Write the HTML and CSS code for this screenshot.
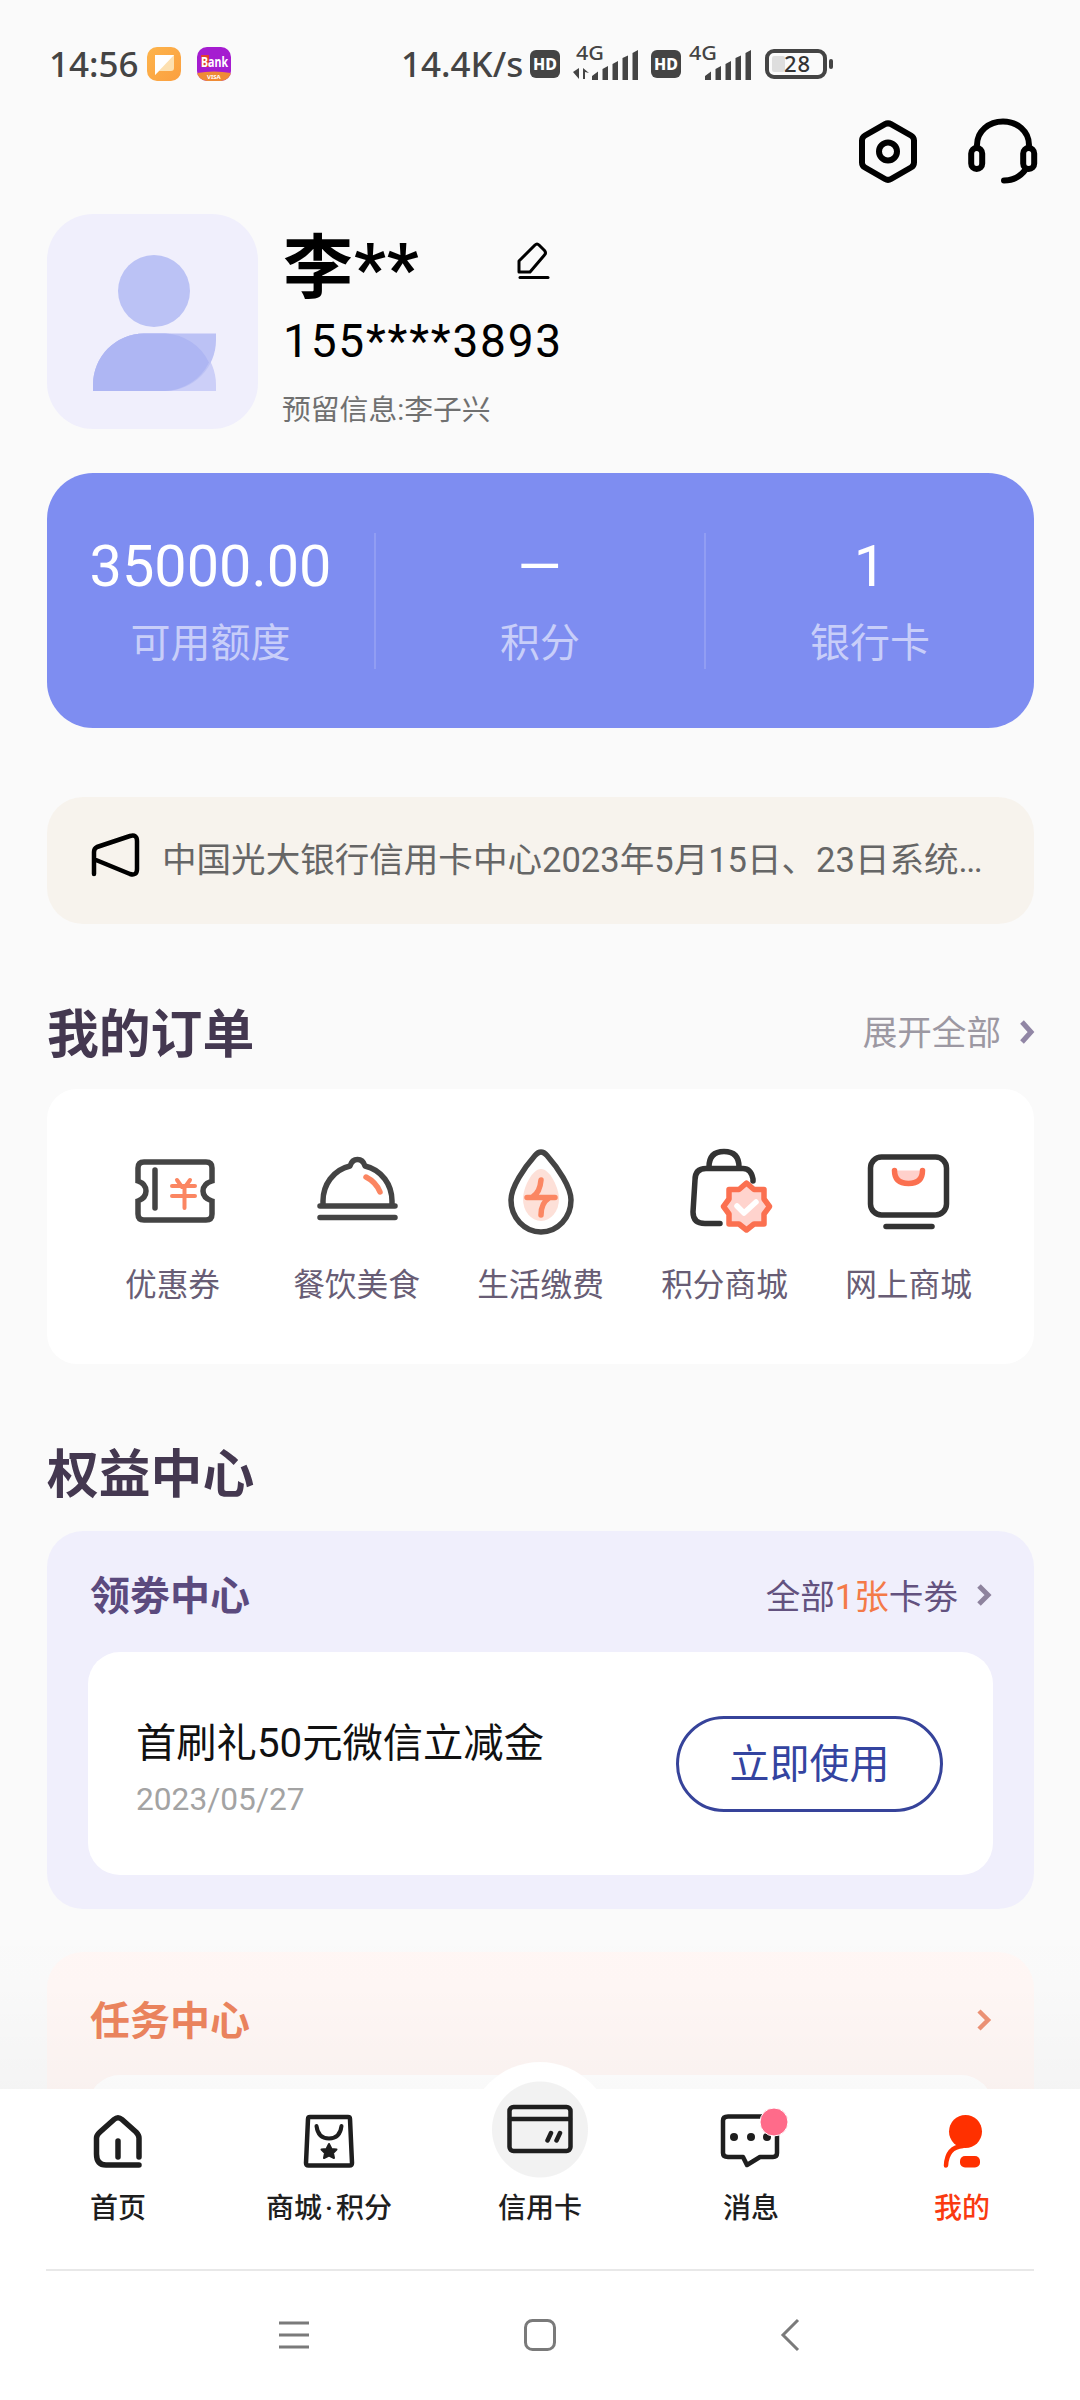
FILE: index.html
```html
<!DOCTYPE html>
<html lang="zh-CN">
<head>
<meta charset="utf-8">
<title>我的</title>
<link rel="stylesheet" href="styles.css">
</head>
<body>
<div class="screen">
  <main class="content">
    <div class="status">
      <span class="clock">14:56</span>
      <svg class="app-note" width="34" height="34" viewBox="0 0 34 34"><defs><linearGradient id="note" x1="0" y1="0" x2="1" y2="1"><stop offset="0" stop-color="#fdb44c"/><stop offset="1" stop-color="#fb9f3f"/></linearGradient></defs><rect width="34" height="34" rx="10" fill="url(#note)"/><path d="M8 8H27V21Q27 24 24 24H12L8 28Z" fill="#fde0b0"/><path d="M8 8H27L8 28Z" fill="#fff"/></svg>
      <svg class="app-bank" width="34" height="34" viewBox="0 0 34 34"><defs><clipPath id="bank"><rect width="34" height="34" rx="10"/></clipPath></defs><g clip-path="url(#bank)"><rect width="34" height="34" fill="#a51cd0"/><path d="M0 26Q17 23 34 26V34H0Z" fill="#ef8b35"/><path d="M4 8H12V20H4Z" fill="#e2402d"/></g><text x="4" y="20" font-size="14" font-weight="700" textLength="27" lengthAdjust="spacingAndGlyphs" fill="#fff">Bank</text><text x="10" y="32" font-size="6" font-weight="700" fill="#fff">VISA</text></svg>
      <span class="speed">14.4K/s</span>
      <span class="hd">HD</span>
      <svg class="signal" width="66" height="36" viewBox="0 0 66 36"><text x="3" y="14" font-size="20" textLength="28" lengthAdjust="spacingAndGlyphs" fill="#444">4G</text><path d="M0 26L6 22V33ZM10 22V33H12V26L16 27Z" fill="#444"/><path d="M19 30L25 25.500V34H19ZM29.500 23L35 20V34H29.500ZM39.500 18L45 15V34H39.500ZM49.500 12L55 9.500V34H49.500ZM59.500 7L65 4V34H59.500Z" fill="#444"/></svg>
      <span class="hd hd-second">HD</span>
      <svg class="signal signal-second" width="66" height="36" viewBox="0 0 66 36"><text x="3" y="14" font-size="20" textLength="28" lengthAdjust="spacingAndGlyphs" fill="#444">4G</text><path d="M19 30L25 25.500V34H19ZM29.500 23L35 20V34H29.500ZM39.500 18L45 15V34H39.500ZM49.500 12L55 9.500V34H49.500ZM59.500 7L65 4V34H59.500Z" fill="#444"/></svg>
      <svg width="70" height="36" viewBox="0 0 70 36"><rect x="2" y="5" width="58" height="26" rx="7" fill="none" stroke="#444" stroke-width="4"/><rect x="7" y="10" width="13" height="16" rx="2" fill="#dedede"/><rect x="64" y="13" width="4" height="10" rx="2" fill="#444"/><text x="19" y="26" font-size="22" textLength="26" fill="#333">28</text></svg>
    </div>

    <div class="actions">
      <svg width="60" height="66" viewBox="0 0 60 66" fill="none" stroke="#000" stroke-width="6"><path d="M27 6.200Q30 4.500 33 6.200L53 17.500Q56 19.200 56 22.500V44.500Q56 47.800 53 49.500L33 61Q30 62.700 27 61L7 49.500Q4 47.800 4 44.500V22.500Q4 19.200 7 17.500Z"/><circle cx="30" cy="33.500" r="9"/></svg>
      <svg width="70" height="66" viewBox="0 0 70 66" fill="none" stroke="#000" stroke-width="6" stroke-linecap="round"><path d="M9 27C9 13 21 3.500 35 3.500S61 13 61 27"/><rect x="3.200" y="30" width="11" height="21" rx="5.500"/><rect x="55.200" y="30" width="11" height="21" rx="5.500"/><path d="M58 51C53 58 45 62.500 36 62.500"/></svg>
    </div>

    <section class="profile">
      <svg class="avatar" width="211" height="215" viewBox="0 0 211 215"><rect width="211" height="215" rx="46" fill="#f0effc"/><circle cx="107" cy="77" r="36" fill="#bbc2f5"/><path d="M46 177V171A51 51.500 0 0 1 97 119.500H118A51 51.500 0 0 1 169 171V177Z" fill="#cccff8"/><path d="M46 177V171A51 51.500 0 0 1 97 119.500H169V126A51 51 0 0 1 118 177Z" fill="#bcc2f5"/><path d="M46 177V171A51 51.500 0 0 1 97 119.500H118A51 51.500 0 0 1 162 148.500A51 51 0 0 1 118 177Z" fill="#aeb6f3"/></svg>
      <div class="who">
        <div class="name-row"><span class="name">李**</span>
          <svg width="34" height="42" viewBox="0 0 34 42" fill="none" stroke="#000" stroke-width="3" stroke-linejoin="round" stroke-linecap="round"><path d="M3 20L19 4Q21 2 23 4L28.500 9.500Q30.500 12 28.500 14L14 31H3Z"/><path d="M4 36.500H32"/></svg>
        </div>
        <div class="phone">155****3893</div>
        <div class="reserved">预留信息:李子兴</div>
      </div>
    </section>

    <section class="stats">
      <div class="stat"><b>35000.00</b><span>可用额度</span></div>
      <div class="stat"><b class="dash">–</b><span>积分</span></div>
      <div class="stat"><b>1</b><span>银行卡</span></div>
    </section>

    <section class="notice">
      <svg width="50" height="46" viewBox="0 0 50 46" fill="none" stroke="#000" stroke-width="4.500" stroke-linecap="round" stroke-linejoin="round"><path d="M3 42V20Q3 16.500 6 15L39 4Q46 2 46 9V37Q46 44 39 42L5 28"/></svg>
      <p>中国光大银行信用卡中心2023年5月15日、23日系统<span class="dots">...</span></p>
    </section>

    <header class="section-head"><h2>我的订单</h2><a class="more">展开全部<svg width="14" height="24" viewBox="0 0 14 24" fill="none" stroke="#9186a5" stroke-width="5"><path d="M2 2L11 12L2 22"/></svg></a></header>
    <section class="orders">
      <div class="order"><svg width="90" height="90" viewBox="-1 0 90 90" fill="none" stroke="#444" stroke-width="5.500" stroke-linecap="round"><path d="M15 16H77Q83 16 83 22V35Q74 38 74 45T83 55V68Q83 74 77 74H15Q9 74 9 68V55Q17 52 17 45T9 35V22Q9 16 15 16Z"/><path d="M26 24V62"/><g stroke="#fb8662" stroke-width="4"><path d="M48 34L53 41M61 34L56 41M43 40H66M43 50H66M55.500 41V62"/></g></svg><span>优惠券</span></div>
      <div class="order"><svg width="90" height="90" viewBox="0 0 90 90" fill="none" stroke="#444" stroke-width="5.500" stroke-linecap="round" stroke-linejoin="round"><path d="M8 60H83M8 71.500H83"/><path d="M11 59V55C11 39 21 24 38 20Q40 13.500 45.500 13.500T53 20C70 24 80 39 80 55V59"/><path d="M54 31Q64 36 68 46" stroke="#fb8662"/></svg><span>餐饮美食</span></div>
      <div class="order"><svg width="90" height="90" viewBox="0 0 90 90" fill="none" stroke="#444" stroke-width="5.500" stroke-linecap="round"><path d="M45 23C36 23 27 42 27 53A18 22 0 0 0 63 53C63 42 54 23 45 23Z" fill="#fde0d8" stroke="none"/><path d="M39 9.500Q45 2.500 51 9.500C62 22 75 41 75 54A30 32 0 0 1 15 54C15 41 28 22 39 9.500Z"/><path d="M45 34Q44 46 37 50.500M53 52Q45 57 45 69M31 51.500H59" stroke="#fb8662" stroke-linejoin="round"/></svg><span>生活缴费</span></div>
      <div class="order"><svg width="90" height="90" viewBox="-2 0 90 90" fill="none" stroke="#333" stroke-width="5.500" stroke-linecap="round" stroke-linejoin="round"><path d="M27 22V21Q27 5.500 42 5.500T57 21V22"/><path d="M71 35V33Q69 22.500 61 22.500H24Q13 22.500 13 34L11 66Q11 77.500 23 77.500H38"/><path d="M64.500 37L72 43.500H82V53L87.500 60.500L82 68V78H72L64.500 84L57 78H47V68L41.500 60.500L47 53V43.500H57Z" fill="#ffd3cd" stroke="#fb7050"/><path d="M55 60L62 67L74 56" stroke="#fff"/></svg><span>积分商城</span></div>
      <div class="order"><svg width="90" height="90" viewBox="0 0 90 90" fill="none" stroke="#333" stroke-width="5.500" stroke-linecap="round"><rect x="6.500" y="11" width="76" height="58" rx="11"/><path d="M22 80.500H68"/><path d="M30.500 24.500Q30.500 37.500 44.500 37.500T58.500 24.500" fill="#ffd0cb" stroke="#fb7050"/></svg><span>网上商城</span></div>
    </section>

    <header class="section-head"><h2>权益中心</h2></header>
    <section class="panel coupons">
      <header class="panel-head"><h3>领劵中心</h3><a class="more">全部<em>1张</em>卡劵<svg width="14" height="22" viewBox="0 0 14 22" fill="none" stroke="#8e839e" stroke-width="5"><path d="M2 2L11 11L2 20"/></svg></a></header>
      <div class="coupon">
        <div><h4>首刷礼50元微信立减金</h4><time>2023/05/27</time></div>
        <button class="use">立即使用</button>
      </div>
    </section>
    <section class="panel tasks">
      <header class="panel-head"><h3>任务中心</h3><svg width="14" height="22" viewBox="0 0 14 22" fill="none" stroke="#ed9275" stroke-width="4.500"><path d="M2 2L11 11L2 20"/></svg></header>
      <div class="task"></div>
    </section>
    <div class="shade"></div>
  </main>

  <nav class="tabs">
    <div class="hump"></div>
    <div class="tab"><svg width="66" height="60" viewBox="0 0 66 60" fill="none" stroke="#1e1e1e" stroke-width="5.500" stroke-linecap="round" stroke-linejoin="round"><path d="M54 47V28Q54 25 51 22L37 9.500Q33 6 29 9.500L15 22Q11.500 25 11.500 28V44Q11.500 55 21 55H54"/><path d="M33 31V47"/></svg><span>首页</span></div>
    <div class="tab"><svg width="66" height="60" viewBox="0 0 66 60" fill="none" stroke="#1e1e1e" stroke-width="4.500" stroke-linecap="round" stroke-linejoin="round"><path d="M14 7H52Q54 7 54 9L56 53Q56 55.500 53.500 55.500H12.500Q10 55.500 10 53L12 9Q12 7 14 7Z"/><path d="M20.500 16Q22 28.500 33 28.500T45.500 16" stroke-width="4"/><path d="M33 34L35.500 39L40.500 39.500L37 43L38 48L33 45.500L28 48L29 43L25.500 39.500L30.500 39Z" fill="#1e1e1e" stroke-width="2"/></svg><span>商城<i>·</i>积分</span></div>
    <div class="tab"><svg class="lifted" width="66" height="60" viewBox="0 0 66 60" fill="none" stroke="#1e1e1e" stroke-width="4.500" stroke-linecap="round"><rect x="2.500" y="7" width="61" height="44" rx="4"/><path d="M3 19H63M44 33L40.500 40.500M53 33L49.500 40.500"/></svg><span>信用卡</span></div>
    <div class="tab"><svg width="66" height="60" viewBox="0 0 66 60" fill="none" stroke="#1e1e1e" stroke-width="4.500" stroke-linejoin="round"><path d="M10 6.500H55Q59 6.500 59 10.500V43Q59 47 55 47H42L29 55L25 47H10Q5 47 5 43V10.500Q5 6.500 10 6.500Z"/><g fill="#1e1e1e" stroke="none"><circle cx="16" cy="27" r="4"/><circle cx="33" cy="27" r="4"/><circle cx="49" cy="27" r="4"/></g><circle cx="56" cy="12" r="14" fill="#ff6b8a" stroke="#fff" stroke-width="1"/></svg><span>消息</span></div>
    <div class="tab active"><svg width="66" height="60" viewBox="0 0 66 60" fill="none" stroke="#ff3000" stroke-width="4.500" stroke-linecap="round"><circle cx="36.500" cy="21.500" r="16.500" fill="#ff3000" stroke="none"/><path d="M17 55.500Q18 37 34 36"/><rect x="31" y="46" width="20" height="11.500" rx="5" fill="#ff3000" stroke="none"/></svg><span>我的</span></div>
  </nav>
  <div class="system-nav">
    <svg width="32" height="36" viewBox="0 0 32 36" stroke="#7a7a7a" stroke-width="3"><path d="M1 6H31M1 18H31M1 30H31"/></svg>
    <svg width="36" height="36" viewBox="0 0 36 36" fill="none" stroke="#7a7a7a" stroke-width="3"><rect x="3.500" y="3.500" width="29" height="29" rx="7"/></svg>
    <svg width="20" height="36" viewBox="0 0 20 36" fill="none" stroke="#7a7a7a" stroke-width="3"><path d="M18 3L3 18L18 33"/></svg>
  </div>
</div>
</body>
</html>
```
FILE: styles.css
```css
* { box-sizing: border-box; margin: 0; padding: 0; }
body { width: 1080px; background: #fff; font-family: Roboto, "Noto Sans CJK SC", sans-serif; }
svg { display: block; flex: none; overflow: visible; }
.screen { width: 1080px; height: 2400px; display: flex; flex-direction: column; overflow: hidden; }
.content { position: relative; flex: none; height: 2089px; padding: 0 46px 0 47px; background: #fafafa; overflow: hidden; }

.status { display: flex; align-items: center; height: 82px; padding-top: 46px; margin-left: -47px; padding-left: 49px; font-family: "Noto Sans", sans-serif; color: #444; font-weight: 500; }
.clock, .speed { font-size: 35px; line-height: 36px; white-space: nowrap; }
.clock { width: 98px; }
.speed { width: 129px; margin-left: 170px; }
.app-bank { margin-left: 16px; }
.hd { width: 30px; height: 28px; flex: none; border-radius: 6px; background: #444; color: #fff; font: 800 16px/28px "Noto Sans", sans-serif; text-align: center; }
.signal { margin-left: 13px; }
.hd-second { margin-left: 12px; }
.signal-second { margin-left: 5px; margin-right: 13px; }

.actions { display: flex; justify-content: flex-end; gap: 50px; height: 66px; margin: 36px -4px 30px 0; }

.profile { display: flex; height: 215px; }
.who { margin-left: 25px; padding-top: 18px; }
.name-row { display: flex; align-items: center; height: 74px; }
.name { width: 233px; font-size: 70px; line-height: 74px; font-weight: 700; letter-spacing: 1px; }
.name-row svg { margin-top: -14px; }
.phone { height: 54px; margin-top: 8px; font-size: 46px; line-height: 54px; letter-spacing: 1.8px; }
.reserved { margin-top: 24px; margin-left: -1px; font-size: 28.800px; line-height: 36px; color: #707070; }

.stats { display: grid; grid-template-columns: 327px 330px 330px; align-items: center; height: 255px; margin-top: 44px; border-radius: 46px; background: #7e8df1; color: #fff; text-align: center; }
.stat { height: 136px; }
.stat + .stat { border-left: 2px solid #919df3; }
.stat b { display: block; font-size: 57.600px; line-height: 68px; font-weight: 400; }
.stat .dash { transform: scaleX(1.3); }
.stat span { display: block; margin-top: 10px; font-size: 40px; line-height: 66px; color: #c8cef9; }

.notice { display: flex; align-items: center; height: 127px; margin-top: 69px; padding: 0 44px; border-radius: 36px; background: #f7f3ed; }
.notice svg { margin-top: -12px; }
.notice p { margin: -2px 0 0 21px; font-size: 34.560px; line-height: 50px; color: #666; white-space: nowrap; }
.dots { letter-spacing: -1.5px; }

.section-head { display: flex; justify-content: space-between; align-items: center; height: 60px; margin-top: 79px; }
h2 { margin-top: 5px; font-size: 51.800px; line-height: 60px; font-weight: 700; color: #443850; }
.more { display: flex; align-items: center; font-size: 34.600px; line-height: 50px; color: #9c98a2; }
.more svg { margin-left: 19px; margin-top: -3px; }
.orders { display: grid; grid-template-columns: repeat(5, 184px); justify-content: center; height: 275px; margin-top: 26px; padding-top: 57px; border-radius: 30px; background: #fff; }
.order { display: flex; flex-direction: column; align-items: center; font-size: 31.700px; line-height: 44px; color: #685d75; }
.order span { margin-top: 28px; }

.panel { border-radius: 36px; padding: 0 41px; }
.panel-head { display: flex; justify-content: space-between; align-items: center; height: 121px; padding: 10px 2px 0; }
h3 { font-size: 40px; line-height: 54px; font-weight: 700; }
.coupons { height: 378px; margin-top: 28px; background: #f0effc; }
.coupons h3 { color: #5b4a7e; }
.coupons .more { color: #63527f; }
.coupons em { font-style: normal; color: #f47a48; }
.coupon { display: flex; justify-content: space-between; align-items: center; height: 223px; padding: 0 50px 0 48px; border-radius: 32px; background: #fff; }
h4 { font-size: 40.300px; line-height: 56px; font-weight: 400; color: #111; }
time { display: block; font-size: 31.700px; line-height: 40px; margin-top: 8px; color: #a3a3a3; }
.coupon > div { margin-top: 9px; }
.use { width: 267px; height: 96px; padding-top: 3px; border: 3px solid #36439a; border-radius: 48px; background: #fff; color: #3444a0; font: 400 40px/60px Roboto, "Noto Sans CJK SC", sans-serif; }
.tasks { height: 378px; margin-top: 43px; background: #fff7f5; }
.tasks .panel-head { height: 123px; padding-top: 17px; }
.tasks h3 { color: #ec845e; }
.tasks .panel-head svg { margin-top: -4px; }
.task { height: 223px; border-radius: 32px; background: #fff; }
.shade { position: absolute; left: 0; right: 0; bottom: 0; height: 180px; background: linear-gradient(rgba(0,0,0,0), rgba(0,0,0,.004) 40%, rgba(0,0,0,.025)); }

.tabs { position: relative; flex: none; display: grid; grid-template-columns: repeat(5, 211px); justify-content: center; height: 182px; background: #fff; }
.tabs::after { content: ""; position: absolute; left: 46px; right: 46px; bottom: 0; height: 2px; background: #e8e8e8; }
.hump { position: absolute; left: 468px; top: -27px; width: 144px; height: 144px; border-radius: 50%; background: radial-gradient(circle at 72px 67.500px, #f2f2f2 47.500px, #fff 48.500px); }
.tab { position: relative; display: flex; flex-direction: column; align-items: center; padding-top: 21px; font-size: 28px; line-height: 38px; font-weight: 500; color: #1e1e1e; }
.tab span { margin-top: 20px; white-space: nowrap; }
.tab i { display: inline-block; width: 14px; text-align: center; font-style: normal; }
.tab.active { color: #fa3a10; }
.lifted { position: relative; top: -10px; }
.system-nav { display: flex; flex: none; height: 129px; padding: 46px 0 0 278px; background: #fff; }
.system-nav svg + svg { margin-left: 212px; }
.system-nav svg:last-child { margin-left: 222px; }
```
